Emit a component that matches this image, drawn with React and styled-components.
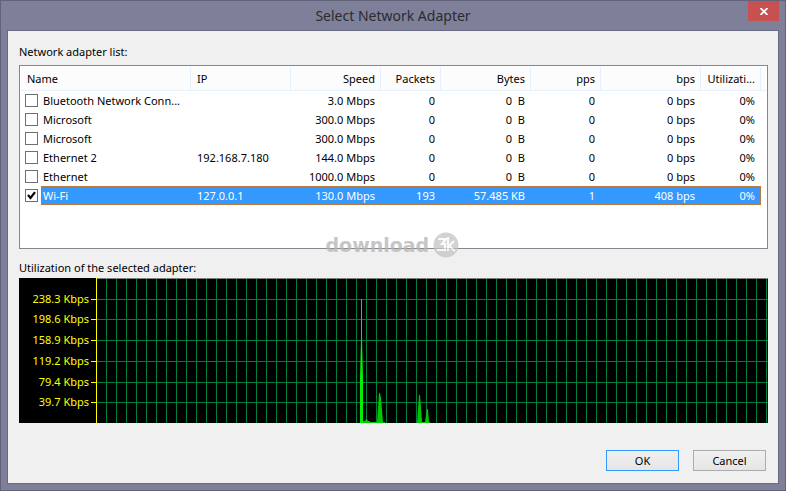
import React, { useState } from "react";
import styled, { createGlobalStyle, css } from "styled-components";

const GlobalStyle = createGlobalStyle`
  * { box-sizing: border-box; }
  body {
    margin: 0;
    font: 11px/17px "Noto Sans", "Open Sans", sans-serif;
    color: #000;
  }
`;

const Window = styled.div`
  display: flex;
  flex-direction: column;
  min-height: 100vh;
  padding: 0 6px 6px;
  border: 1px solid #62637a;
  background: #7e8099;
`;

const TitleBar = styled.header`
  display: grid;
  grid-template-columns: 31px 1fr 31px;
  align-items: start;
  height: 29px;
`;

const Title = styled.h1`
  grid-column: 2;
  margin: 0;
  font-size: 14px;
  font-weight: 400;
  line-height: 29px;
  text-align: center;
  color: #2b2b2e;
`;

const CloseButton = styled.button`
  display: flex;
  align-items: center;
  justify-content: center;
  width: 31px;
  height: 20px;
  padding: 0;
  border: 0;
  background: #c75050;
`;

const Client = styled.main`
  flex: 1;
  display: flex;
  flex-direction: column;
  padding: 12px 10px 12px 11px;
  border: 1px solid #686a82;
  background: #f0f0f0;
`;

const Caption = styled.h2`
  margin: 0 0 ${(p) => (p.$tight ? 2 : 5)}px;
  font-size: 11px;
  font-weight: 400;
  line-height: 17px;
`;

const ListBox = styled.div`
  position: relative;
  height: 184px;
  margin-bottom: 10px;
  padding: 1px;
  border: 1px solid #828790;
  background: #fff;
`;

const Table = styled.table`
  width: 100%;
  table-layout: fixed;
  border-collapse: separate;
  border-spacing: 0;
`;

const Column = styled.col`
  width: ${(p) => p.$width};
`;

const HeadCell = styled.th`
  height: 24px;
  padding: 0 5px 0 6px;
  border-right: 1px solid #e5f1fd;
  border-bottom: 1px solid #e5f1fd;
  background: #fcfcfc;
  font-weight: 400;
  text-align: ${(p) => p.$align};
  white-space: nowrap;
`;

const HeadFill = styled.td`
  padding: 0;
  border-bottom: 1px solid #e5f1fd;
  background: #fcfcfc;
`;

const selection = css`
  background: #3399ff;
  color: #fff;
  border-color: #b87840;
`;

const Cell = styled.td`
  height: 19px;
  padding: 0 6px;
  border: 0 dotted transparent;
  border-width: 1px 0;
  text-align: ${(p) => p.$align};
  white-space: pre;
  ${(p) => p.$selected && selection}
  ${(p) => p.$last && css`
    border-right-width: 1px;
    padding-right: 5px;
  `}
`;

const NameCell = styled.td`
  height: 19px;
  padding: 0;
`;

const NameLabel = styled.label`
  display: flex;
  align-items: center;
  gap: 3px;
  padding-left: 4px;
`;

const NameText = styled.span`
  flex: 1;
  min-width: 0;
  padding-left: 1px;
  border: 1px dotted transparent;
  border-right: 0;
  white-space: nowrap;
  ${(p) => p.$selected && selection}
`;

const CheckBox = styled.input`
  appearance: none;
  width: 13px;
  height: 13px;
  margin: 0;
  border: 1px solid #707070;
  background: #fff;
`;

const CheckWrap = styled.span`
  display: grid;
  flex: none;
  width: 13px;
  height: 13px;
  & > * { grid-area: 1 / 1; }
`;

const CheckMark = styled.svg`
  pointer-events: none;
`;

const Watermark = styled.div`
  position: absolute;
  left: 50%;
  bottom: -10px;
  display: flex;
  align-items: center;
  gap: 4px;
  margin-left: -68px;
  font: 700 19px/26px "DejaVu Sans", sans-serif;
  color: #b4b4b4;
  opacity: 0.75;
  pointer-events: none;
`;

const Chart = styled.svg`
  display: block;
  width: 100%;
  height: 145px;
  background: #000;
  font: 11px "Noto Sans", "Open Sans", sans-serif;
`;

const Actions = styled.footer`
  display: flex;
  justify-content: flex-end;
  gap: 14px;
  margin-top: auto;
  padding-right: 2px;
`;

const Button = styled.button`
  width: 73px;
  height: 21px;
  padding: 0;
  border: 1px solid ${(p) => (p.$primary ? "#3399ff" : "#acacac")};
  background: linear-gradient(#f0f0f0, #e5e5e5);
  font: inherit;
  line-height: 19px;
  color: #000;
`;

const columns = [
  { title: "Name", align: "left", width: "auto" },
  { title: "IP", align: "left", width: "100px" },
  { title: "Speed", align: "right", width: "90px" },
  { title: "Packets", align: "right", width: "60px" },
  { title: "Bytes", align: "right", width: "90px" },
  { title: "pps", align: "right", width: "70px" },
  { title: "bps", align: "right", width: "100px" },
  { title: "Utilizati...", align: "right", width: "60px" },
];

const adapters = [
  ["Bluetooth Network Conn...", "", "3.0 Mbps", "0", "0  B", "0", "0 bps", "0%"],
  ["Microsoft", "", "300.0 Mbps", "0", "0  B", "0", "0 bps", "0%"],
  ["Microsoft", "", "300.0 Mbps", "0", "0  B", "0", "0 bps", "0%"],
  ["Ethernet 2", "192.168.7.180", "144.0 Mbps", "0", "0  B", "0", "0 bps", "0%"],
  ["Ethernet", "", "1000.0 Mbps", "0", "0  B", "0", "0 bps", "0%"],
  ["Wi-Fi", "127.0.0.1", "130.0 Mbps", "193", "57.485 KB", "1", "408 bps", "0%"],
];

const scale = [
  ["238.3 Kbps", 21],
  ["198.6 Kbps", 41],
  ["158.9 Kbps", 62],
  ["119.2 Kbps", 83],
  ["79.4 Kbps", 104],
  ["39.7 Kbps", 124],
];

function AdapterRow({ values, selected, checked, onToggle }) {
  const [name, ...rest] = values;
  return (
    <tr>
      <NameCell>
        <NameLabel>
          <CheckWrap>
            <CheckBox type="checkbox" checked={checked} onChange={onToggle} />
            {checked && (
              <CheckMark width="13" height="13" viewBox="0 0 13 13" aria-hidden="true">
                <path d="M3 6 L5.5 9 L10 3.2" fill="none" stroke="#000" strokeWidth="2.2" />
              </CheckMark>
            )}
          </CheckWrap>
          <NameText $selected={selected}>{name}</NameText>
        </NameLabel>
      </NameCell>
      {rest.map((value, i) => (
        <Cell
          key={i}
          $align={columns[i + 1].align}
          $selected={selected}
          $last={i === rest.length - 1}
        >
          {value}
        </Cell>
      ))}
      <td />
    </tr>
  );
}

function UtilizationChart() {
  return (
    <Chart role="img" aria-label="Utilization of the selected adapter">
      <defs>
        <pattern id="columns" x="77" y="0" width="10" height="145" patternUnits="userSpaceOnUse">
          <rect x="0" width="1" height="145" fill="#008040" />
        </pattern>
      </defs>
      <rect x="78" width="100%" height="145" fill="url(#columns)" />
      {scale.map(([label, y]) => (
        <g key={label}>
          <rect x="78" y={y} width="100%" height="1" fill="#008040" />
          <rect x="72" y={y} width="5" height="1" fill="#ff0" />
          <text x="70" y={y + 4} textAnchor="end" fill="#ff0">{label}</text>
        </g>
      ))}
      <rect x="78" width="100%" height="1" fill="#808080" />
      <rect x="77" width="1" height="145" fill="#ff0" />
      <path d="M341 145 V100 L342 60 V21 H343 V60 L344 100 V145 Z" fill="#00f000" />
      <g fill="#00c800">
        <path d="M344 143 H346 L347 141 H348 L349 143 H351 V144 H358 L360 115 H361 L362 120 L364 144 H366 V145 H344 Z" />
        <path d="M398 145 L400 117 H401 L403 144 H406 L408 131 H409 L410 144 H411 V145 Z" />
      </g>
    </Chart>
  );
}

export default function App() {
  const [checked, setChecked] = useState([false, false, false, false, false, true]);
  const toggle = (row) => setChecked((list) => list.map((on, i) => (i === row ? !on : on)));

  return (
    <>
      <GlobalStyle />
      <Window>
        <TitleBar>
          <Title>Select Network Adapter</Title>
          <CloseButton aria-label="Close">
            <svg width="8" height="7" viewBox="0 0 8 7" aria-hidden="true">
              <path d="M0.5 0 L7.5 7 M7.5 0 L0.5 7" stroke="#fff" strokeWidth="1.7" />
            </svg>
          </CloseButton>
        </TitleBar>
        <Client>
          <Caption>Network adapter list:</Caption>
          <ListBox>
            <Table>
              <colgroup>
                {columns.map((c) => <Column key={c.title} $width={c.width} />)}
                <Column $width="5px" />
              </colgroup>
              <thead>
                <tr>
                  {columns.map((c) => (
                    <HeadCell key={c.title} scope="col" $align={c.align}>{c.title}</HeadCell>
                  ))}
                  <HeadFill />
                </tr>
              </thead>
              <tbody>
                {adapters.map((values, i) => (
                  <AdapterRow
                    key={i}
                    values={values}
                    selected={i === 5}
                    checked={checked[i]}
                    onToggle={() => toggle(i)}
                  />
                ))}
              </tbody>
            </Table>
            <Watermark>
              <span>download</span>
              <svg width="26" height="26" viewBox="0 0 26 26" aria-hidden="true">
                <circle cx="13" cy="13" r="12.5" fill="#c4c4c4" />
                <path d="M5 7 H13 L9 12 H12 V18 H4 M15 5 V19 M21 9 L16 14 L22 19" fill="none" stroke="#fafafa" strokeWidth="2.2" />
              </svg>
            </Watermark>
          </ListBox>
          <Caption $tight>Utilization of the selected adapter:</Caption>
          <UtilizationChart />
          <Actions>
            <Button $primary>OK</Button>
            <Button>Cancel</Button>
          </Actions>
        </Client>
      </Window>
    </>
  );
}
